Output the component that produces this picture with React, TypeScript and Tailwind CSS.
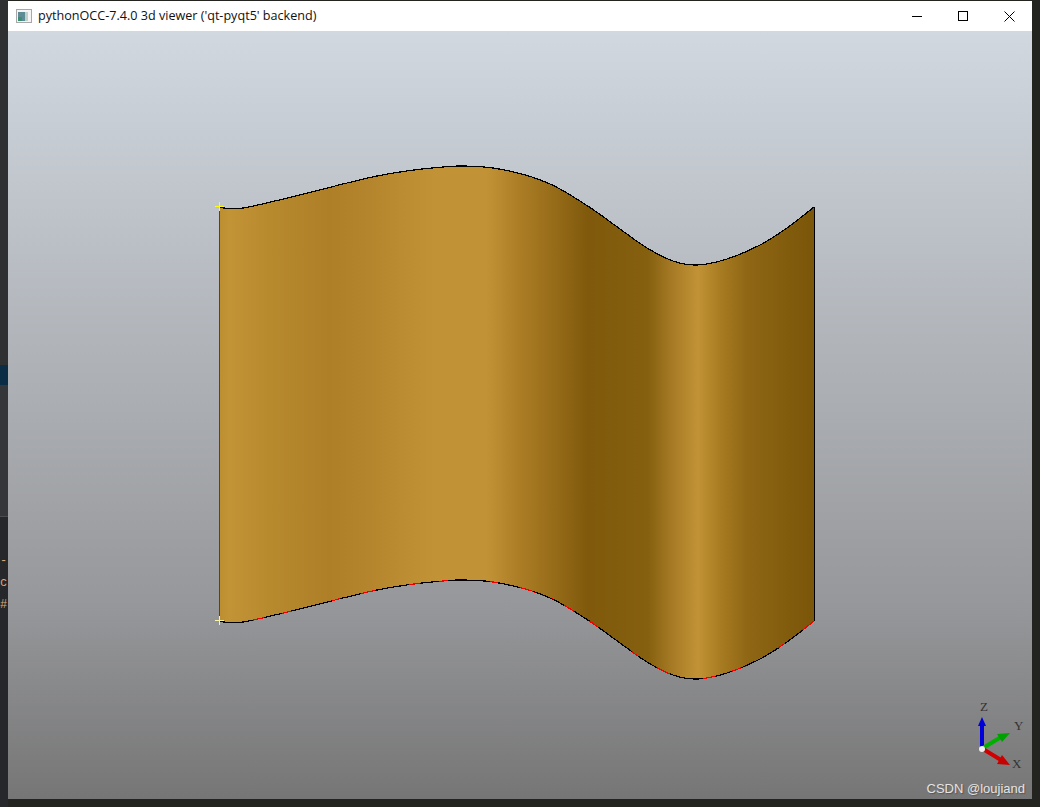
import React from 'react';

// points read off the top edge of the surface; the bottom edge is the same curve 414px lower
const EDGE: [number, number][] = [
  [219, 207], [228, 208.5], [243, 208], [260, 204.5], [277, 200.5], [310, 192.5], [343, 184], [377, 176],
  [410, 170.5], [443, 167], [463, 166], [493, 168], [527, 175.5], [550, 184], [567, 193], [593, 209.5],
  [620, 229], [647, 248], [673, 261], [697, 265], [727, 259], [760, 245], [787, 228], [814, 207],
];

// catmull-rom through the points, as cubic segments
const segments = (pts: [number, number][]) =>
  pts
    .slice(0, -1)
    .map((p, i) => {
      const a = pts[Math.max(i - 1, 0)];
      const b = pts[i + 1];
      const c = pts[Math.min(i + 2, pts.length - 1)];
      const c1x = p[0] + (b[0] - a[0]) / 6;
      const c1y = p[1] + (b[1] - a[1]) / 6;
      const c2x = b[0] - (c[0] - p[0]) / 6;
      const c2y = b[1] - (c[1] - p[1]) / 6;
      return `C${c1x},${c1y} ${c2x},${c2y} ${b[0]},${b[1]}`;
    })
    .join(' ');

const curve = (dy: number) => {
  const pts = EDGE.map(([x, y]) => [x, y + dy] as [number, number]);
  return `M${pts[0][0]},${pts[0][1]} ${segments(pts)}`;
};

const lower = EDGE.map(([x, y]) => [x, y + 414] as [number, number]).reverse();
const SURFACE = `${curve(0)} L814,621 ${segments(lower)} Z`;

const Surface: React.FC = () => (
  <svg viewBox="8 31 1024 768" className="block w-full h-full">
    <defs>
      <linearGradient id="metal" gradientUnits="userSpaceOnUse" x1="219" y1="0" x2="814" y2="0">
        <stop offset="0" stopColor="#bc8e30" />
        <stop offset="0.017" stopColor="#c29436" />
        <stop offset="0.084" stopColor="#b88a2e" />
        <stop offset="0.185" stopColor="#ae7f27" />
        <stop offset="0.252" stopColor="#b4852c" />
        <stop offset="0.365" stopColor="#c29336" />
        <stop offset="0.449" stopColor="#c29336" />
        <stop offset="0.504" stopColor="#ac7d25" />
        <stop offset="0.553" stopColor="#9a6f1b" />
        <stop offset="0.62" stopColor="#80590c" />
        <stop offset="0.721" stopColor="#85600f" />
        <stop offset="0.761" stopColor="#a67a25" />
        <stop offset="0.805" stopColor="#c29336" />
        <stop offset="0.845" stopColor="#a67a20" />
        <stop offset="0.889" stopColor="#8e6614" />
        <stop offset="0.99" stopColor="#7c570a" />
        <stop offset="1" stopColor="#7b570c" />
      </linearGradient>
    </defs>
    <path d={SURFACE} fill="url(#metal)" />
    <path d={curve(0)} fill="none" stroke="#000" strokeWidth="1.2" shapeRendering="crispEdges" />
    <path d={curve(414)} fill="none" stroke="#f00000" strokeWidth="1.2" shapeRendering="crispEdges" />
    <path
      d={curve(414)}
      fill="none"
      stroke="#000"
      strokeWidth="1.2"
      strokeDasharray="34 12 18 10 42 8 22 14"
      shapeRendering="crispEdges"
    />
    <path d="M219.5,208 V621" stroke="#e80000" strokeWidth="1" shapeRendering="crispEdges" />
    <path d="M814.5,207 V621" stroke="#000" strokeWidth="1" shapeRendering="crispEdges" />
    <path d="M215,206.5 H224 M219.5,202 V211" stroke="#ffff00" strokeWidth="1" shapeRendering="crispEdges" />
    <path d="M215,620.5 H224 M219.5,616 V625" stroke="#f6f6a0" strokeWidth="1" shapeRendering="crispEdges" />

    {/* axis triad */}
    <path d="M982,748 V725" stroke="#0000d8" strokeWidth="4" />
    <path d="M982,717 L986,726 H978 Z" fill="#0000d8" />
    <path d="M983,748 L1001,737" stroke="#00b000" strokeWidth="4" />
    <path d="M1010,733 L1002,742 L997,734 Z" fill="#00a000" />
    <path d="M983,749 L1001,760" stroke="#d00000" strokeWidth="4" />
    <path d="M1010,765 L997,764 L1002,755 Z" fill="#c80000" />
    <circle cx="982" cy="749" r="3" fill="#eeeeee" />
    <text x="980" y="711" fontSize="13" fill="#333" fontFamily="'Liberation Serif', serif">Z</text>
    <text x="1014" y="730" fontSize="13" fill="#333" fontFamily="'Liberation Serif', serif">Y</text>
    <text x="1012" y="768" fontSize="13" fill="#333" fontFamily="'Liberation Serif', serif">X</text>
  </svg>
);

const App: React.FC = () => {
  return (
    <div className="w-[1040px] h-[807px] flex bg-[#23241f] overflow-hidden">
      {/* editor peeking out on the left */}
      <div className="w-2 h-full flex flex-col bg-[#333437]">
        <div className="h-[365px] bg-[#2f3032]" />
        <div className="h-[20px] bg-[#0b2c45]" />
        <div className="h-[132px] bg-[#35363a] border-b border-[#4a4b4d]" />
        <div className="flex-1 bg-[#26272a] pt-[33px] text-[12px] leading-[22px] text-[#d8a878] font-['Liberation_Mono',monospace] overflow-hidden whitespace-nowrap">
          <div>-[</div>
          <div>c</div>
          <div>#</div>
        </div>
      </div>

      <div className="w-[1024px] h-full flex flex-col pt-px pb-2">
        <div className="h-[30px] bg-white flex items-center shrink-0">
          <svg width="16" height="16" viewBox="0 0 16 16" className="ml-2 mr-[6px] shrink-0">
            <rect x="0.5" y="1.5" width="15" height="13" fill="#f4f4f4" stroke="#a8a8a8" />
            <rect x="2" y="4" width="7" height="9" fill="#5d8c96" />
            <rect x="9" y="4" width="3" height="9" fill="#bcd0cc" />
            <rect x="2" y="9" width="4" height="4" fill="#3b8f70" />
          </svg>
          <span className="text-[12.6px] text-[#111] font-['Open_Sans',sans-serif]">
            pythonOCC-7.4.0 3d viewer ('qt-pyqt5' backend)
          </span>
          <div className="ml-auto flex items-center">
            <div className="w-[46px] h-[30px] flex items-center justify-center">
              <div className="w-[10px] h-px bg-black" />
            </div>
            <div className="w-[46px] h-[30px] flex items-center justify-center">
              <div className="w-[10px] h-[10px] border border-black" />
            </div>
            <div className="w-[46px] h-[30px] flex items-center justify-center">
              <svg width="11" height="11" viewBox="0 0 11 11">
                <path d="M0.5,0.5 L10.5,10.5 M10.5,0.5 L0.5,10.5" stroke="#000" strokeWidth="1" />
              </svg>
            </div>
          </div>
        </div>

        <div className="relative flex-1 bg-gradient-to-b from-[#d1d8e0] via-[#96979a] via-75% to-[#767676]">
          <Surface />
          <span className="absolute right-[7px] bottom-[1px] text-[13px] text-[#e4e4e4] font-['Liberation_Sans',sans-serif] [text-shadow:1px_1px_1px_#555]">
            CSDN @loujiand
          </span>
        </div>
      </div>

      <div className="w-2 h-full" />
    </div>
  );
};

export default App;
